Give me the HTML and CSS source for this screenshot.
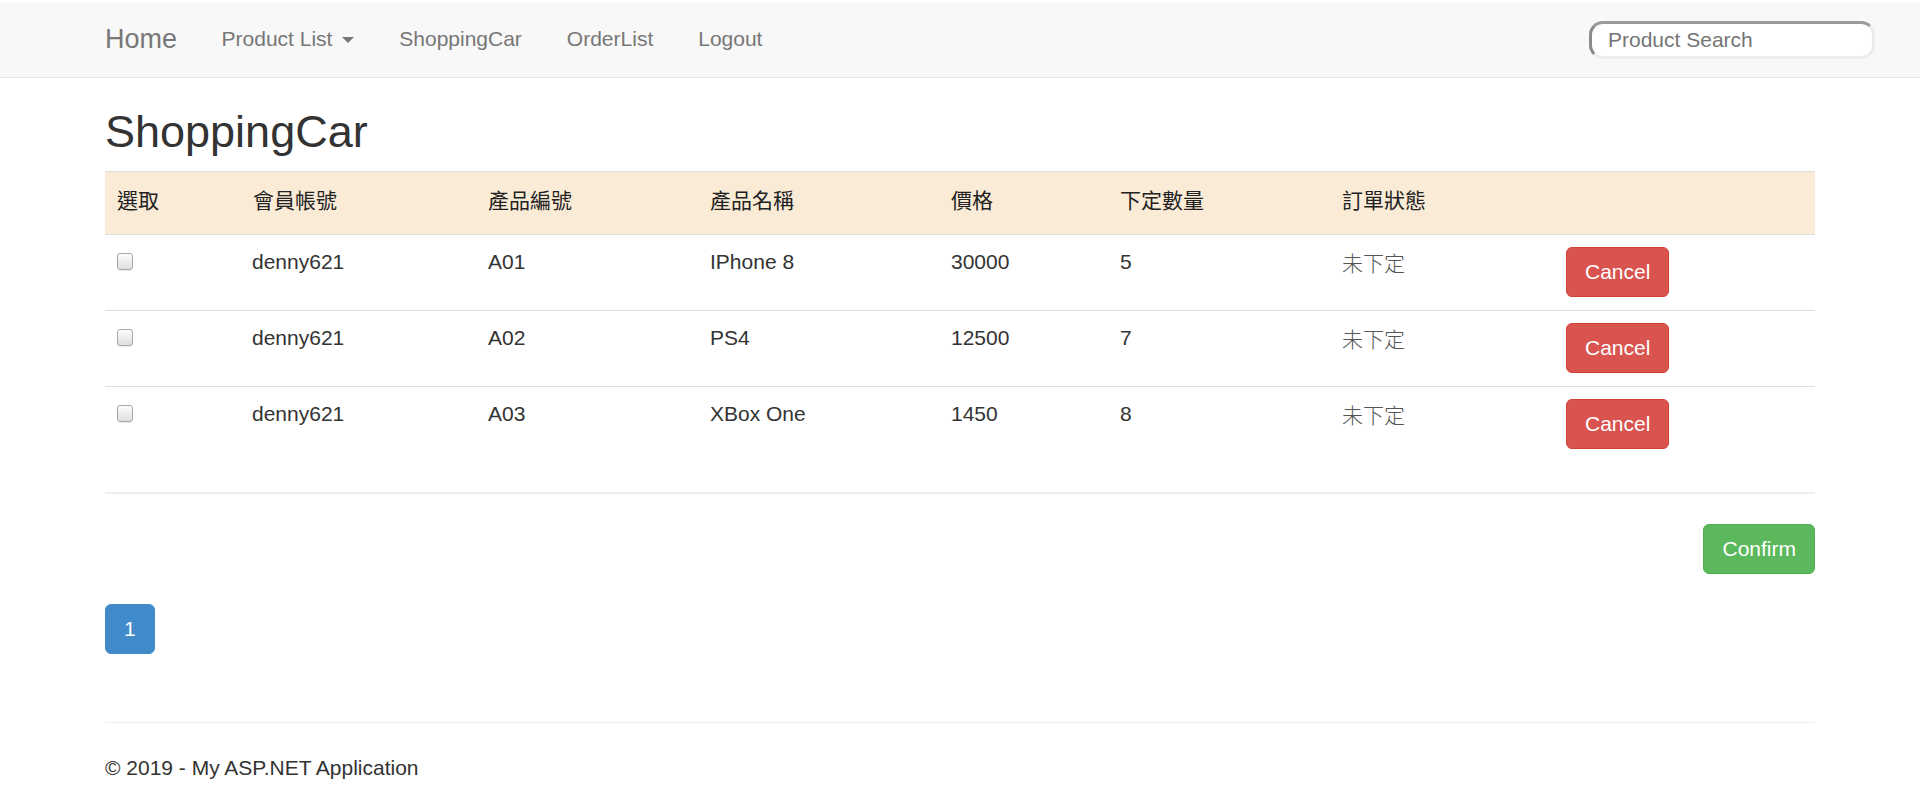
FILE: index.html
```html
<!DOCTYPE html>
<html lang="zh-Hant">
<head>
<meta charset="utf-8">
<title>ShoppingCar</title>
<link rel="stylesheet" href="styles.css">
</head>
<body>
<nav class="navbar">
  <div class="container nav-inner">
    <a class="brand" href="#">Home</a>
    <ul class="nav">
      <li><a href="#">Product List <span class="caret"></span></a></li>
      <li><a href="#">ShoppingCar</a></li>
      <li><a href="#">OrderList</a></li>
      <li><a href="#">Logout</a></li>
    </ul>
    <input class="search" type="text" placeholder="Product Search">
  </div>
</nav>

<main class="container body-content">
  <h2 class="title">ShoppingCar</h2>
  <table class="table">
    <colgroup>
      <col class="c1"><col class="c2"><col class="c3"><col class="c4">
      <col class="c5"><col class="c6"><col class="c7"><col class="c8">
    </colgroup>
    <tr class="head">
      <th>選取</th><th>會員帳號</th><th>產品編號</th><th>產品名稱</th>
      <th>價格</th><th>下定數量</th><th>訂單狀態</th><th></th>
    </tr>
    <tr>
      <td><span class="check"></span></td><td>denny621</td><td>A01</td><td>IPhone 8</td>
      <td>30000</td><td>5</td><td class="status">未下定</td><td><button class="btn btn-danger">Cancel</button></td>
    </tr>
    <tr>
      <td><span class="check"></span></td><td>denny621</td><td>A02</td><td>PS4</td>
      <td>12500</td><td>7</td><td class="status">未下定</td><td><button class="btn btn-danger">Cancel</button></td>
    </tr>
    <tr>
      <td><span class="check"></span></td><td>denny621</td><td>A03</td><td>XBox One</td>
      <td>1450</td><td>8</td><td class="status">未下定</td><td><button class="btn btn-danger">Cancel</button></td>
    </tr>
  </table>
  <hr class="rule">
  <div class="actions">
    <button class="btn btn-success">Confirm</button>
  </div>
  <ul class="pagination">
    <li><a class="active" href="#">1</a></li>
  </ul>
  <hr class="footer-rule">
  <footer class="footer">
    <p>© 2019 - My ASP.NET Application</p>
  </footer>
</main>
</body>
</html>
```

FILE: styles.css
```css
* { box-sizing: border-box; }

html, body {
  margin: 0;
  padding: 0;
  background: #fff;
}

body {
  padding-top: 2px;
  font-family: "Liberation Sans", Arial, "Noto Sans CJK TC", sans-serif;
  font-size: 21px;
  line-height: 30px;
  color: #333;
}

.container {
  width: 1710px;
  margin: 0 auto;
}

/* Navbar */
.navbar {
  background: #f8f8f8;
  border-bottom: 1px solid #e7e7e7;
  height: 76px;
}

.nav-inner {
  display: flex;
  align-items: center;
  height: 75px;
}

.brand {
  font-size: 27px;
  line-height: 30px;
  color: #777;
  text-decoration: none;
  padding: 22px 22px 23px 0;
}

.nav {
  display: flex;
  list-style: none;
  margin: 0;
  padding: 0;
  flex: 1;
}

.nav a {
  display: block;
  padding: 22px 22.5px 23px;
  color: #777;
  text-decoration: none;
  line-height: 30px;
}

.caret {
  display: inline-block;
  width: 0;
  height: 0;
  margin-left: 4px;
  vertical-align: middle;
  border-top: 6px solid #777;
  border-left: 6px solid transparent;
  border-right: 6px solid transparent;
}

.search {
  width: 286px;
  height: 38px;
  margin-right: -60px;
  padding: 0 0 0 16px;
  font-family: "Liberation Sans", Arial, sans-serif;
  font-size: 21px;
  color: #333;
  background: #fff;
  border-style: solid;
  border-width: 3px;
  border-color: #9a9a9a #ececec #ececec #8a8a8a;
  border-radius: 14px;
  outline: none;
}

.search::placeholder {
  color: #757575;
}

/* Content */
.title {
  margin: 29px 0 14px;
  font-size: 45px;
  line-height: 50px;
  font-weight: 500;
  color: #333;
}

.table {
  width: 100%;
  border-collapse: collapse;
  table-layout: fixed;
  margin-bottom: 30px;
}

.c1 { width: 136px; }
.c2 { width: 235px; }
.c3 { width: 222px; }
.c4 { width: 241px; }
.c5 { width: 169px; }
.c6 { width: 222px; }
.c7 { width: 224px; }
.c8 { width: 261px; }

.table th,
.table td {
  text-align: left;
  vertical-align: top;
  border-top: 1px solid #ddd;
}

.table th {
  padding: 12px 12px 20px;
  font-weight: 400;
  font-family: "Noto Sans CJK TC", "Liberation Sans", sans-serif;
  color: #222;
  line-height: 30px;
}

.head {
  background: #faebd7;
}

.table td {
  padding: 12px 12px 13px 12px;
  line-height: 30px;
}

.table td:nth-child(2) {
  padding-left: 11px;
}

.status {
  font-family: "Noto Sans CJK TC", sans-serif;
  color: #555;
  font-weight: 300;
}

.check {
  display: block;
  width: 16px;
  height: 17px;
  margin-top: 6px;
  border: 1px solid #a9a9a9;
  border-radius: 3px;
  background: linear-gradient(#fdfdfd, #dedede);
  box-shadow: 0 1px 1px rgba(0,0,0,0.08);
}

.btn {
  display: inline-block;
  padding: 9px 18px;
  font-family: "Liberation Sans", Arial, sans-serif;
  font-size: 21px;
  line-height: 30px;
  color: #fff;
  border: 1px solid transparent;
  border-radius: 6px;
  cursor: pointer;
}

.btn-danger {
  background: #d9534f;
  border-color: #d43f3a;
}

.btn-success {
  background: #5cb85c;
  border-color: #4cae4c;
}

.rule {
  margin: 0 0 30px;
  border: 0;
  border-top: 2px solid #eee;
}

.actions {
  display: flex;
  justify-content: flex-end;
}

.pagination {
  display: flex;
  list-style: none;
  margin: 30px 0 0;
  padding: 0;
}

.pagination a {
  display: block;
  padding: 9px 18px;
  line-height: 30px;
  text-decoration: none;
  border: 1px solid #ddd;
  border-radius: 6px;
}

.pagination a.active {
  background: #428bca;
  border-color: #428bca;
  color: #fff;
}

.footer-rule {
  margin: 68px 0 30px;
  border: 0;
  border-top: 1px solid #eee;
}

.footer p {
  margin: 0 0 15px;
}
```
